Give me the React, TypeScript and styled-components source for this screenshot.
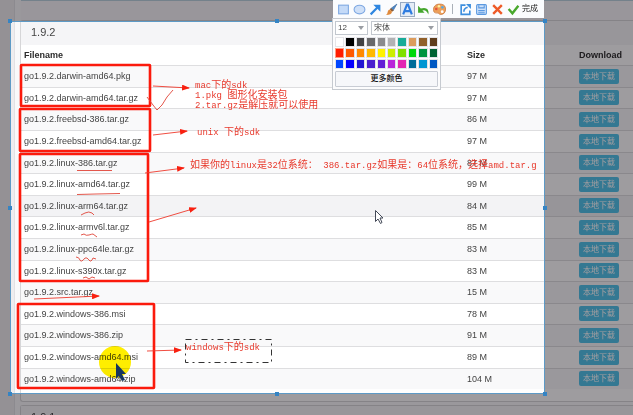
import React from 'react';
import styled, { createGlobalStyle } from 'styled-components';

const GlobalStyle = createGlobalStyle`
  * { box-sizing: border-box; }
  body { margin: 0; font-family: "Liberation Sans", "Noto Sans CJK SC", Arial, sans-serif; }
`;

const cjk = '"Liberation Sans", "Noto Sans CJK SC", sans-serif';

const Screen = styled.div`
  position: relative;
  height: 100vh;
  overflow: hidden;
  background: #eeedef;
`;

const Page = styled.main`
  margin-left: 14px;
  padding-left: 6px;
  border-left: 1px solid #e2e1e4;
  background: #f9f9fa;
`;

const PreviousPanel = styled.div`
  height: 20px;
  background: #f7f6f8;
  border-top: 1px solid #b9d3de;
`;

const Panel = styled.section`
  margin-left: -1px;
  margin-bottom: 3px;
  padding-bottom: 12px;
  border: 1px solid #d6d6d8;
  border-right: 0;
  border-radius: 3px 0 0 3px;
  background: #fff;
`;

const PanelTitle = styled.h2`
  margin: 0;
  padding: 0 10px;
  height: 24px;
  line-height: 23px;
  font-size: 11px;
  font-weight: 400;
  color: #444;
  background: #f5f5f7;
`;

const FileTable = styled.table`
  width: 100%;
  table-layout: fixed;
  border-collapse: separate;
  border-spacing: 0;
  font-size: 9px;
  color: #444;
`;

const HeadCell = styled.th<{ $width?: number }>`
  width: ${p => (p.$width ? `${p.$width}px` : 'auto')};
  height: 20px;
  padding: 0 0 0 3px;
  text-align: left;
  font-weight: 700;
  color: #2c2c2c;
`;

const FileRow = styled.tr<{ $hovered: boolean }>`
  height: 22px;
  background: ${p => (p.$hovered ? '#f3f3f5' : '#fff')};
  &:nth-child(odd) { background: ${p => (p.$hovered ? '#f3f3f5' : '#f9f9fa')}; }
  &:nth-child(5n + 2), &:nth-child(5n) { height: 21px; }
`;

const Cell = styled.td`
  padding: 0 0 1px 3px;
  border-top: 1px solid #dedee0;
  line-height: 14px;
  white-space: nowrap;
`;

const DownloadButton = styled.button`
  display: block;
  height: 15px;
  width: 40px;
  padding: 0;
  border: 0;
  border-radius: 2px;
  background: #4fc3ea;
  color: #fff;
  font: 8px/15px ${cjk};
`;

const SelectionFrame = styled.div`
  position: absolute;
  left: 10px;
  top: 21px;
  width: 535px;
  height: 373px;
  border: 1px solid #5d9ac6;
  box-shadow: 0 0 0 2000px rgba(12, 8, 14, 0.4);
  pointer-events: none;
`;

const Drawing = styled.svg`
  position: absolute;
  left: 0;
  top: 0;
  width: 633px;
  height: 415px;
  pointer-events: none;
`;

const Highlight = styled(Drawing)`
  mix-blend-mode: multiply;
`;

const Note = styled.p<{ $x: number; $y: number }>`
  position: absolute;
  left: ${p => p.$x}px;
  top: ${p => p.$y}px;
  margin: 0;
  font: 10px/10px "Noto Sans CJK SC", sans-serif;
  color: #e8392c;
  white-space: pre;
`;

const Latin = styled.span`
  font-family: "Liberation Mono", monospace;
  font-size: 9px;
  line-height: 0;
`;

const Toolbox = styled.div`
  position: absolute;
  left: 333px;
  top: 0;
`;

const Toolbar = styled.div`
  display: flex;
  align-items: center;
  width: 211px;
  height: 18px;
  padding: 0 3px;
  gap: 1px;
  background: #fbfcfe;
`;

const Tool = styled.button<{ $active?: boolean }>`
  display: flex;
  align-items: center;
  justify-content: center;
  width: 15px;
  height: 15px;
  flex: none;
  padding: 0;
  border: 1px solid ${p => (p.$active ? '#98aac2' : 'transparent')};
  background: ${p => (p.$active ? '#e4ecf6' : 'none')};
`;

const Divider = styled.span`
  width: 1px;
  height: 10px;
  margin: 0 4px;
  background: #aab0b8;
`;

const DoneButton = styled.button`
  display: flex;
  align-items: center;
  gap: 2px;
  margin-left: 1px;
  padding: 0;
  border: 0;
  background: none;
  font: 8px/14px ${cjk};
  color: #222;
  white-space: nowrap;
`;

const Options = styled.div`
  display: flex;
  flex-direction: column;
  gap: 2px;
  width: 109px;
  margin-left: -1px;
  padding: 2px;
  border: 1px solid #c6cad0;
  background: #fcfcfd;
`;

const SelectLine = styled.div`
  display: flex;
  gap: 3px;
`;

const SelectBox = styled.label<{ $grow?: boolean }>`
  display: grid;
  align-items: center;
  justify-items: end;
  width: 33px;
  flex: ${p => (p.$grow ? 1 : 'none')};
  height: 14px;
  padding-right: 3px;
  border: 1px solid #c2c7ce;
  background: #fff;
  & > * { grid-area: 1 / 1; }
`;

const Select = styled.select`
  appearance: none;
  justify-self: stretch;
  padding: 0 0 0 2px;
  border: 0;
  background: none;
  font: 8px/12px ${cjk};
  color: #444;
`;

const Swatches = styled.div`
  display: grid;
  grid-template-columns: repeat(10, 1fr);
  gap: 1px;
`;

const Swatch = styled.button<{ $color: string; $selected: boolean }>`
  height: 10px;
  padding: 0;
  border: 1px solid ${p => (p.$selected ? '#ff9a80' : '#e4e4e8')};
  background: ${p => p.$color};
`;

const MoreColors = styled.button`
  height: 16px;
  padding: 0;
  border: 1px solid #c8ccd4;
  border-radius: 1px;
  background: #f6f7fa;
  font: 500 8px/14px ${cjk};
  color: #111;
`;

const files: [string, string][] = [
  ['go1.9.2.darwin-amd64.pkg', '97 M'],
  ['go1.9.2.darwin-amd64.tar.gz', '97 M'],
  ['go1.9.2.freebsd-386.tar.gz', '86 M'],
  ['go1.9.2.freebsd-amd64.tar.gz', '97 M'],
  ['go1.9.2.linux-386.tar.gz', '87 M'],
  ['go1.9.2.linux-amd64.tar.gz', '99 M'],
  ['go1.9.2.linux-arm64.tar.gz', '84 M'],
  ['go1.9.2.linux-armv6l.tar.gz', '85 M'],
  ['go1.9.2.linux-ppc64le.tar.gz', '83 M'],
  ['go1.9.2.linux-s390x.tar.gz', '83 M'],
  ['go1.9.2.src.tar.gz', '15 M'],
  ['go1.9.2.windows-386.msi', '78 M'],
  ['go1.9.2.windows-386.zip', '91 M'],
  ['go1.9.2.windows-amd64.msi', '89 M'],
  ['go1.9.2.windows-amd64.zip', '104 M'],
];

const notes = [
  { x: 195, y: 79, text: 'mac下的sdk\n1.pkg 图形化安装包\n2.tar.gz是解压就可以使用' },
  { x: 197, y: 126, text: 'unix 下的sdk' },
  { x: 190, y: 159, text: '如果你的linux是32位系统： 386.tar.gz如果是：64位系统，选择amd.tar.g' },
  { x: 186, y: 341, text: 'windows下的sdk' },
];

const colors = [
  '#ffffff', '#000000', '#424244', '#68686a', '#8b8b8d', '#b2b2b4', '#18ab98', '#dc9c5c', '#91602a', '#5e3d1c',
  '#ff1c00', '#ff5a00', '#ff8a00', '#ffb900', '#fff200', '#cdee00', '#7fe000', '#00d80a', '#00933e', '#006233',
  '#0046ff', '#0500ff', '#2216d2', '#4a1fce', '#6420d6', '#b926da', '#e226b2', '#006c98', '#0095d2', '#0058c2',
];

const arrows = [
  [153, 86, 189, 88],
  [153, 135, 187, 131],
  [145, 173, 184, 168],
  [149, 222, 196, 208],
  [147, 351, 181, 350],
  [34, 299, 99, 296],
];

const frames = [
  [21, 65, 129, 41],
  [20, 109, 130, 42],
  [20, 154, 128, 127],
  [18, 304, 136, 84],
];

const handles = [10, 277, 545].flatMap(x => [21, 208, 394].map(y => [x, y])).filter(([x, y]) => !(x === 277 && y === 208));

function NoteText({ text }: { text: string }) {
  return (
    <>
      {text.split(/([\x20-\x7e]+)/).map((run, i) => (i % 2 ? <Latin key={i}>{run}</Latin> : run))}
    </>
  );
}

const Icon = ({ children }: { children: React.ReactNode }) => (
  <svg width="13" height="13" viewBox="0 0 12 12" fill="none" aria-hidden="true">{children}</svg>
);

const Caret = () => (
  <svg width="6" height="4" viewBox="0 0 6 4" aria-hidden="true"><path d="M0 0h6L3 4z" fill="#9a9da3" /></svg>
);

export default function App() {
  return (
    <Screen>
      <GlobalStyle />
      <Page>
        <PreviousPanel />
        <Panel>
          <PanelTitle>1.9.2</PanelTitle>
          <FileTable>
            <thead>
              <tr>
                <HeadCell>Filename</HeadCell>
                <HeadCell $width={112}>Size</HeadCell>
                <HeadCell $width={57}>Download</HeadCell>
              </tr>
            </thead>
            <tbody>
              {files.map(([name, size]) => (
                <FileRow key={name} $hovered={name.includes('arm64')}>
                  <Cell>{name}</Cell>
                  <Cell>{size}</Cell>
                  <Cell><DownloadButton>本地下载</DownloadButton></Cell>
                </FileRow>
              ))}
            </tbody>
          </FileTable>
        </Panel>
        <Panel>
          <PanelTitle>1.9.1</PanelTitle>
        </Panel>
      </Page>

      <SelectionFrame />
      <Highlight viewBox="0 0 633 415" aria-hidden="true">
        <circle cx="115" cy="362" r="16" fill="#ffee00" />
      </Highlight>
      <Drawing viewBox="0 0 633 415" fill="none" aria-hidden="true">
        <defs>
          <marker id="head" markerUnits="userSpaceOnUse" markerWidth="8" markerHeight="6" refX="7" refY="3" orient="auto">
            <path d="M0 0L8 3L0 6z" fill="#f82010" />
          </marker>
        </defs>
        {handles.map(([x, y]) => <rect key={`${x}-${y}`} x={x - 2} y={y - 2} width="4" height="4" fill="#3584c4" />)}
        {frames.map(([x, y, w, h]) => (
          <rect key={y} x={x} y={y} width={w} height={h} rx="0.5" stroke="#fb1a0c" strokeWidth="2.6" />
        ))}
        {arrows.map(([x1, y1, x2, y2]) => (
          <line key={y1} x1={x1} y1={y1} x2={x2} y2={y2} stroke="#ee3a2c" strokeWidth="0.9" markerEnd="url(#head)" />
        ))}
        <g stroke="#e04438" strokeWidth="0.9">
          <path d="M147 97L150 101L153 105L157 110L162 105L167 97L173 90" />
          <path d="M77 170.5H112" />
          <path d="M77 194.500L96 194L120 193.500" />
          <path d="M81 215L85 213Q89 211 92 213L94 215" />
          <path d="M81 235L84 234Q86 236 89 235T93 234L97 237" />
          <path d="M76 257Q79 257 80 260T85 258Q87 257 89 260T93 258L96 259" />
          <path d="M83 278L86 277L89 279L92 277L95 278" />
        </g>
        <rect x="185.500" y="339.500" width="86" height="23" stroke="#333" strokeDasharray="6 4 2 4" />
        <path d="M116 363V379L119 376L122 381L125 380L122 374L126 374Z" fill="#16365f" />
        <path d="M375.500 210.500V221.500L378 219L380.500 223.500L382 222.500L380 218H383Z" fill="#fff" stroke="#444a58" />
      </Drawing>
      {notes.map(n => <Note key={n.y} $x={n.x} $y={n.y}><NoteText text={n.text} /></Note>)}

      <Toolbox>
        <Toolbar>
          <Tool aria-label="Rectangle">
            <Icon><rect x="1.500" y="2" width="9" height="8" fill="#c4daf8" stroke="#7ea8e2" /></Icon>
          </Tool>
          <Tool aria-label="Ellipse">
            <Icon><ellipse cx="6" cy="6" rx="5" ry="4" fill="#cfe0f8" stroke="#7ea8e2" /></Icon>
          </Tool>
          <Tool aria-label="Arrow">
            <Icon><path d="M1.500 10.500L8 4" stroke="#2f86e0" strokeWidth="2" /><path d="M4 1.500H10.500V8Z" fill="#2f86e0" /></Icon>
          </Tool>
          <Tool aria-label="Brush">
            <Icon>
              <path d="M11 1L5.500 5L7.500 7Z" fill="#4a86c8" stroke="#3a6aa0" strokeWidth="0.6" />
              <path d="M5.500 4.500L8 7L6.500 8L4.500 6Z" fill="#8a5a34" />
              <path d="M4.500 6L6.500 8Q6 11 1 11Q2.500 9.500 2.500 8Q3 6 4.500 6Z" fill="#e08a3c" />
            </Icon>
          </Tool>
          <Tool aria-label="Text" $active>
            <Icon><path d="M2 10.500L5.500 1.500H6.500L10 10.500M3.500 7.500H8.500" stroke="#2f7ce0" strokeWidth="2" /></Icon>
          </Tool>
          <Tool aria-label="Undo">
            <Icon><path d="M1 2.500V9H7L5 7Q8 5.500 10.500 10.500Q11.500 3 3.500 5Z" fill="#43a52c" /></Icon>
          </Tool>
          <Tool aria-label="Palette">
            <Icon>
              <path d="M6 1C2 1 0 4 .5 7C1 10 4 9 5 9.500S6 11 8 10.500C11 10 12 7 11.500 4.500C11 2 9 1 6 1Z" fill="#eda05a" stroke="#c8743a" strokeWidth="0.7" />
              <circle cx="3" cy="5.500" r="1.200" fill="#e8523a" />
              <circle cx="5.500" cy="3" r="1.100" fill="#fff0a0" />
              <circle cx="8.700" cy="4" r="1.200" fill="#58a8e0" />
              <circle cx="8.500" cy="8" r="1.300" fill="#fff" />
            </Icon>
          </Tool>
          <Divider />
          <Tool aria-label="Export">
            <Icon>
              <path d="M6 2H2V10.500H10V7" stroke="#3d8ede" strokeWidth="1.500" />
              <path d="M4.500 8Q4.500 5 8 4" stroke="#3d8ede" strokeWidth="1.500" /><path d="M6.500 1H11V5.500Z" fill="#3d8ede" />
            </Icon>
          </Tool>
          <Tool aria-label="Save">
            <Icon>
              <rect x="1.500" y="1.500" width="9" height="9" rx="1" fill="#cfe2fa" stroke="#5a98e0" />
              <path d="M3.500 2V4.500H8.500V2M3 7H9M3 9H9" stroke="#5a98e0" />
            </Icon>
          </Tool>
          <Tool aria-label="Cancel">
            <Icon><path d="M2 2L10 10M10 2L2 10" stroke="#ee5a28" strokeWidth="2.200" /></Icon>
          </Tool>
          <DoneButton>
            <Icon><path d="M1.500 5.500L5 9.500L10.500 2.500" stroke="#48a82c" strokeWidth="2.200" /></Icon>
            完成
          </DoneButton>
        </Toolbar>
        <Options>
          <SelectLine>
            <SelectBox>
              <Select aria-label="Font size" defaultValue="12"><option>12</option></Select>
              <Caret />
            </SelectBox>
            <SelectBox $grow>
              <Select aria-label="Font" defaultValue="宋体"><option>宋体</option></Select>
              <Caret />
            </SelectBox>
          </SelectLine>
          <Swatches>
            {colors.map((c, i) => <Swatch key={c} $color={c} $selected={i === 10} aria-label={c} />)}
          </Swatches>
          <MoreColors>更多颜色</MoreColors>
        </Options>
      </Toolbox>
    </Screen>
  );
}
